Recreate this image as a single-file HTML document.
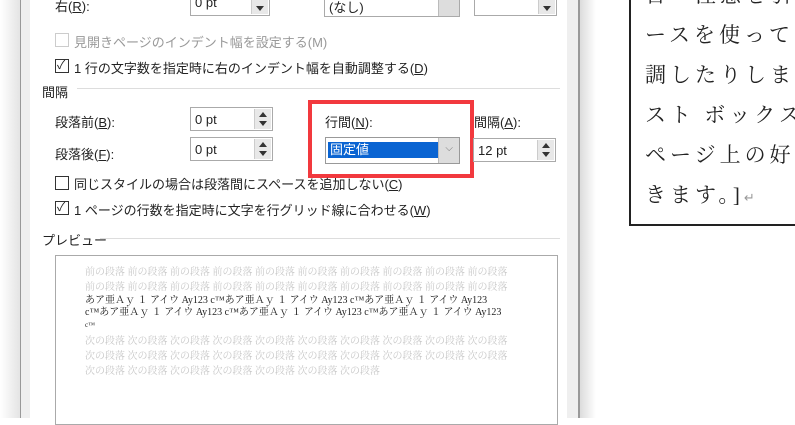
<!DOCTYPE html>
<html><head><meta charset="utf-8"><style>
body{margin:0;width:795px;height:418px;overflow:hidden;background:#fff;position:relative;font-family:"Liberation Sans","Noto Sans CJK JP",sans-serif;font-size:13px;color:#222}
.a{position:absolute;white-space:nowrap}
.box{position:absolute;background:#fff;border:1px solid #aaa;box-sizing:border-box}
.spin{position:absolute;right:1px;top:1px;bottom:1px;width:16px;background:#e8e8e8;border-left:1px solid #ccc}
.spin:before{content:"";position:absolute;left:4px;top:3px;border:4px solid transparent;border-top:0;border-bottom:5px solid #333}
.spin:after{content:"";position:absolute;left:4px;bottom:3px;border:4px solid transparent;border-bottom:0;border-top:5px solid #333}
.cb{position:absolute;width:12px;height:12px;border:1px solid #333;background:#fff}
.dd{position:absolute;right:0;top:0;bottom:0;width:20px;background:#ddd;border-left:1px solid #bbb}
u{text-decoration:underline}
.pv{position:absolute;left:85px;font-family:"Liberation Serif","Noto Serif CJK SC",serif;font-size:10px;line-height:15px;color:#c8c8c8;white-space:nowrap}
</style></head><body>
<div class="a" style="left:0;top:0;width:20px;height:418px;background:linear-gradient(to right,#fff,#e4e4e4)"></div>
<div class="a" style="left:20px;top:0;width:1px;height:418px;background:#999"></div>
<div class="a" style="left:21px;top:0;width:9px;height:418px;background:#efefef"></div>
<div class="a" style="left:567px;top:0;width:11px;height:418px;background:#efefef"></div>
<div class="a" style="left:578px;top:0;width:2px;height:418px;background:#999"></div>
<div class="a" style="left:580px;top:0;width:16px;height:418px;background:linear-gradient(to right,#dcdcdc,#fff)"></div>

<div class="a" style="left:55px;top:-4px">右(<u>R</u>):</div>
<div class="box" style="left:190px;top:-10px;width:80px;height:26px"><span class="a" style="left:4px;top:4px">0 pt</span><div class="spin" style="background:#e8e8e8"></div></div>
<div class="box" style="left:324px;top:-10px;width:136px;height:27px"><span class="a" style="left:4px;top:6px">(なし)</span><div class="dd"></div></div>
<div class="box" style="left:474px;top:-10px;width:83px;height:26px"><div class="spin"></div></div>

<div class="cb" style="left:55px;top:33px;border-color:#ccc"></div>
<div class="a" style="left:74px;top:32px;color:#999">見開きページのインデント幅を設定する(M)</div>
<div class="cb" style="left:55px;top:59px"></div><div class="a" style="left:57px;top:56px;font-size:12px">✓</div>
<div class="a" style="left:74px;top:58px">1 行の文字数を指定時に右のインデント幅を自動調整する(<u>D</u>)</div>
<div class="a" style="left:42px;top:82px">間隔</div>
<div class="a" style="left:77px;top:88px;width:483px;height:1px;background:#ddd"></div>

<div class="a" style="left:55px;top:112px">段落前(<u>B</u>):</div>
<div class="box" style="left:190px;top:107px;width:83px;height:24px"><span class="a" style="left:4px;top:4px">0 pt</span><div class="spin"></div></div>
<div class="a" style="left:55px;top:144px">段落後(<u>F</u>):</div>
<div class="box" style="left:190px;top:137px;width:83px;height:24px"><span class="a" style="left:4px;top:4px">0 pt</span><div class="spin"></div></div>

<div class="a" style="left:325px;top:112px">行間(<u>N</u>):</div>
<div class="box" style="left:325px;top:137px;width:135px;height:27px;border-color:#999"><div class="a" style="left:2px;top:4px;width:111px;height:16px;background:#0a64d2;color:#fff;line-height:16px;padding-left:2px">固定値</div><div class="dd" style="width:20px"></div><span class="a" style="right:6px;top:5px;color:#777;font-size:10px">⌵</span></div>
<div class="a" style="left:308px;top:100px;width:158px;height:70px;border:4px solid #f2393e"></div>
<div class="a" style="left:474px;top:112px">間隔(<u>A</u>):</div>
<div class="box" style="left:473px;top:138px;width:83px;height:24px"><span class="a" style="left:4px;top:4px">12 pt</span><div class="spin"></div></div>

<div class="cb" style="left:55px;top:176px"></div>
<div class="a" style="left:74px;top:174px">同じスタイルの場合は段落間にスペースを追加しない(<u>C</u>)</div>
<div class="cb" style="left:55px;top:201px"></div><div class="a" style="left:57px;top:198px;font-size:12px">✓</div>
<div class="a" style="left:74px;top:200px">1 ページの行数を指定時に文字を行グリッド線に合わせる(<u>W</u>)</div>
<div class="a" style="left:42px;top:230px">プレビュー</div>
<div class="a" style="left:100px;top:238px;width:460px;height:1px;background:#ddd"></div>

<div class="box" style="left:55px;top:255px;width:503px;height:170px;border-color:#aaa"></div>
<div class="pv" style="top:265px">前の段落 前の段落 前の段落 前の段落 前の段落 前の段落 前の段落 前の段落 前の段落 前の段落<br>前の段落 前の段落 前の段落 前の段落 前の段落 前の段落 前の段落 前の段落 前の段落 前の段落</div>
<div class="pv" style="top:295px;color:#222;line-height:12px">あア亜Ａｙ １ アイウ Ay123 c™あア亜Ａｙ １ アイウ Ay123 c™あア亜Ａｙ １ アイウ Ay123<br>c™あア亜Ａｙ １ アイウ Ay123 c™あア亜Ａｙ １ アイウ Ay123 c™あア亜Ａｙ １ アイウ Ay123<br><span style="font-size:7px">c™</span></div>
<div class="pv" style="top:334px">次の段落 次の段落 次の段落 次の段落 次の段落 次の段落 次の段落 次の段落 次の段落 次の段落<br>次の段落 次の段落 次の段落 次の段落 次の段落 次の段落 次の段落 次の段落 次の段落 次の段落<br>次の段落 次の段落 次の段落 次の段落 次の段落 次の段落 次の段落</div>

<div class="a" style="left:629px;top:-5px;width:200px;height:229px;border-left:2px solid #222;border-bottom:2px solid #222"></div>
<div class="a" style="left:645px;top:-25px;font-family:'Liberation Serif','Noto Serif CJK JP',serif;font-size:21px;line-height:40px;letter-spacing:4px;color:#222">言・注意を引<br>ースを使って<br>調したりしま<br>スト ボックス<br>ページ上の好<br>きます。]<span style="font-size:13px;color:#999">↵</span></div>
</body></html>
